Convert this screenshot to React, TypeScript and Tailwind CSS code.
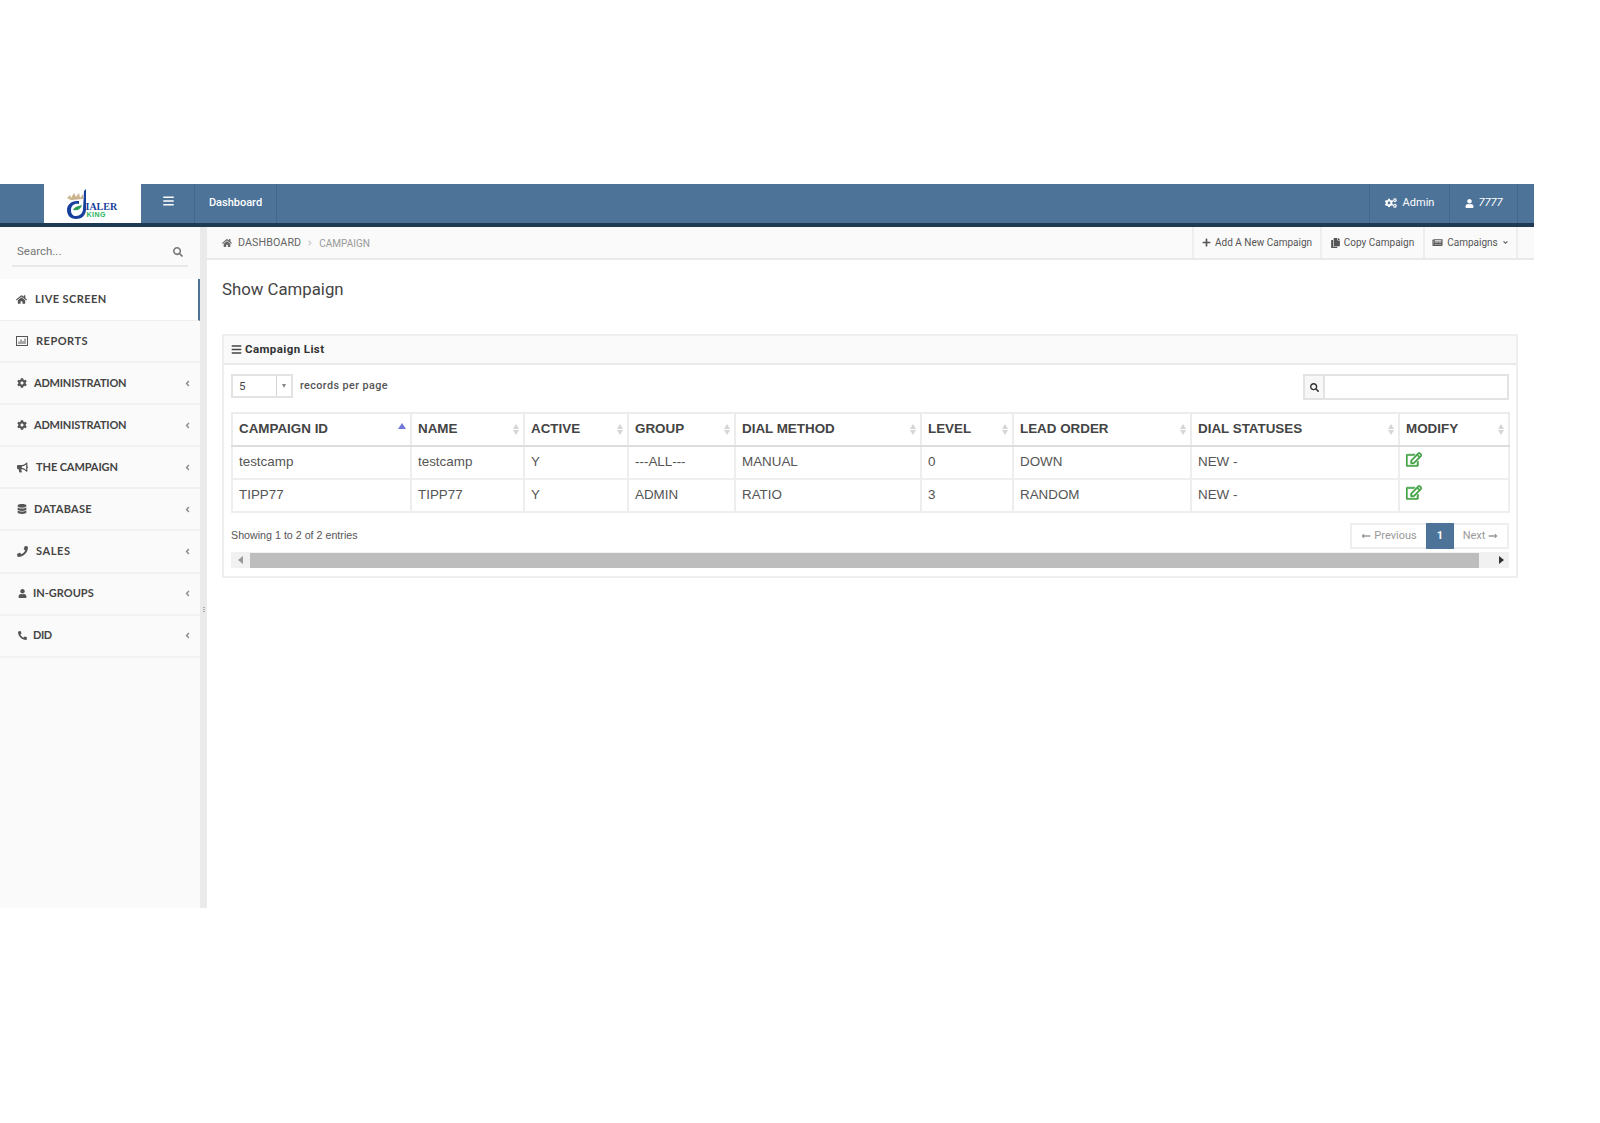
import type { ReactNode } from "react"
import {
  FaAngleDown,
  FaAngleLeft,
  FaAngleRight,
  FaBars,
  FaBullhorn,
  FaCog,
  FaCogs,
  FaCopy,
  FaDatabase,
  FaHome,
  FaLongArrowAltLeft,
  FaLongArrowAltRight,
  FaNewspaper,
  FaPhone,
  FaPlus,
  FaRegEdit,
  FaSearch,
  FaUser,
} from "react-icons/fa"

function ReportIcon() {
  return (
    <svg viewBox="0 0 12 10" className="w-[12px] h-[10px]" fill="none">
      <rect x="0.5" y="0.5" width="11" height="9" stroke="currentColor" />
      <path d="M3 8V5.5M5 8V3.5M7 8V5M9 8V2.5" stroke="currentColor" />
    </svg>
  )
}

const menu: { label: string; icon: ReactNode; text: string; arrow?: boolean }[] = [
  { label: "REPORTS", icon: <ReportIcon />, text: "ml-[8px] tracking-[0.5px]" },
  { label: "ADMINISTRATION", icon: <FaCog className="w-[10px] h-[10px]" />, text: "ml-[6px] tracking-[-0.2px]", arrow: true },
  { label: "ADMINISTRATION", icon: <FaCog className="w-[10px] h-[10px]" />, text: "ml-[6px] tracking-[-0.2px]", arrow: true },
  { label: "THE CAMPAIGN", icon: <FaBullhorn className="w-[11px] h-[11px]" />, text: "ml-[8px] tracking-[-0.1px]", arrow: true },
  { label: "DATABASE", icon: <FaDatabase className="w-[10px] h-[10px]" />, text: "ml-[6px] tracking-[0.3px]", arrow: true },
  { label: "SALES", icon: <FaPhone className="w-[11px] h-[11px]" />, text: "ml-[8px] tracking-[0.6px]", arrow: true },
  { label: "IN-GROUPS", icon: <FaUser className="w-[9px] h-[9px]" />, text: "ml-[5px]", arrow: true },
  { label: "DID", icon: <FaPhone className="w-[9px] h-[9px] rotate-90" />, text: "ml-[5px] tracking-[-0.4px]", arrow: true },
]

const columns = [
  { label: "CAMPAIGN ID", width: "w-[179px]" },
  { label: "NAME", width: "w-[113px]" },
  { label: "ACTIVE", width: "w-[104px]" },
  { label: "GROUP", width: "w-[107px]" },
  { label: "DIAL METHOD", width: "w-[186px]" },
  { label: "LEVEL", width: "w-[92px]" },
  { label: "LEAD ORDER", width: "w-[178px]" },
  { label: "DIAL STATUSES", width: "w-[208px]" },
  { label: "MODIFY", width: "w-[110px]" },
]

const rows = [
  ["testcamp", "testcamp", "Y", "---ALL---", "MANUAL", "0", "DOWN", "NEW -"],
  ["TIPP77", "TIPP77", "Y", "ADMIN", "RATIO", "3", "RANDOM", "NEW -"],
]

function Logo() {
  return (
    <div className="relative w-[56px] h-[32px]">
      <svg viewBox="0 0 60 32" className="w-[60px] h-[32px]">
        <path d="M2 9 L5 6 L6 9 L9 4 L11 8 L14 4 L15 9 L18 5 L18 10 L6 11 Z" fill="#c9b28c" />
        <path d="M19 2 L21 0 L21 20 C21 27 16 30 11 30 C5 30 2 26 2 21 C2 16 6 12 12 12 L14 12 L14 15 C9 14 6 17 6 21 C6 25 8 27 11 27 C15 27 18 24 18 20 Z" fill="#173f9c" />
        <path d="M8 21 C10 17 14 17 17 16 C16 20 13 22 8 21 Z" fill="#2f9e57" />
      </svg>
      <span className="absolute left-[21px] top-[11px] font-['Liberation_Serif',serif] font-bold text-[10px] leading-[13px] text-[#173f9c]">IALER</span>
      <span className="absolute left-[22px] top-[22px] font-['Liberation_Sans',sans-serif] font-bold text-[7px] leading-[8px] tracking-[0.5px] text-[#22b45a]">KING</span>
    </div>
  )
}

function SortArrows({ active }: { active?: boolean }) {
  if (active) {
    return <span className="w-0 h-0 mb-[7px] border-x-[4px] border-x-transparent border-b-[6px] border-b-[#6f78d8]" />
  }
  return (
    <span className="flex flex-col gap-[1px] items-center">
      <span className="w-0 h-0 border-x-[3.5px] border-x-transparent border-b-[5px] border-b-[#d5d5d5]" />
      <span className="w-0 h-0 border-x-[3.5px] border-x-transparent border-t-[5px] border-t-[#d5d5d5]" />
    </span>
  )
}

function Sidebar() {
  return (
    <aside className="w-[200px] shrink-0 bg-[#fafafa] font-['Lato',sans-serif]">
      <div className="h-[52px] px-[12px] pt-[14px]">
        <div className="h-[26px] border-b-2 border-[#e9e9e9] flex items-center justify-between pl-[5px] pr-[5px] pb-[3px] text-[#777]">
          <span className="font-['Roboto',sans-serif] text-[11.5px]">Search...</span>
          <FaSearch className="w-[10px] h-[10px]" />
        </div>
      </div>
      <div className="h-[42px] bg-white border-r-2 border-[#4d7399] border-b border-b-[#efefef] flex items-center pl-[16px] text-[#555]">
        <FaHome className="w-[11px] h-[11px]" />
        <span className="ml-[8px] text-[11px] font-bold tracking-[0.4px] text-[#444]">LIVE SCREEN</span>
      </div>
      {menu.map((item, i) => (
        <div key={i} className="h-[42.1px] border-b-2 border-[#f1f1f1] flex items-center pl-[16px] pr-[8px] text-[#555]">
          <span className="w-[12px] flex justify-center">{item.icon}</span>
          <span className={`${item.text} text-[11px] font-bold text-[#444]`}>{item.label}</span>
          {item.arrow && <FaAngleLeft className="ml-auto w-[9px] h-[9px] text-[#888]" />}
        </div>
      ))}
    </aside>
  )
}

function CampaignCard() {
  return (
    <section className="border-2 border-[#eeeeee] h-[244px]">
      <div className="h-[29px] bg-[#fafafa] border-b-2 border-[#e9e9e9] flex items-center pl-[7px] text-[#333] font-['Roboto',sans-serif]">
        <FaBars className="w-[11px] h-[11px] text-[#444]" />
        <span className="ml-[3px] text-[11.5px] font-bold tracking-[0.4px]">Campaign List</span>
      </div>
      <div className="px-[7px] pt-[9px]">
        <div className="flex items-start justify-between h-[38px]">
          <div className="flex items-center">
            <div className="w-[62px] h-[24px] border-2 border-[#e3e3e3] flex text-[11.5px] text-[#444] font-['Roboto',sans-serif]">
              <span className="flex-1 pl-[6px] leading-[20px]">5</span>
              <span className="w-[15px] border-l border-[#d5d5d5] flex items-center justify-center">
                <span className="w-0 h-0 border-x-[2.5px] border-x-transparent border-t-[4px] border-t-[#888]" />
              </span>
            </div>
            <span className="ml-[7px] font-['Roboto',sans-serif] text-[10.8px] font-medium tracking-[0.4px] text-[#555]">records per page</span>
          </div>
          <div className="w-[206px] h-[26px] border-2 border-[#e3e3e3] flex">
            <span className="w-[20px] bg-[#f7f7f7] border-r-2 border-[#e3e3e3] flex items-center justify-center text-[#333]">
              <FaSearch className="w-[9px] h-[9px]" />
            </span>
          </div>
        </div>
        <table className="w-[1277px] table-fixed border-collapse font-['Liberation_Sans',sans-serif] text-[13.4px]">
          <thead>
            <tr className="h-[33px]">
              {columns.map((col, i) => (
                <th key={col.label} className={`${col.width} border-2 border-[#ececec] border-b-[#dddddd] pl-[6px] pr-[4px] text-left font-bold text-[#444]`}>
                  <div className="flex items-center justify-between">
                    <span>{col.label}</span>
                    <SortArrows active={i === 0} />
                  </div>
                </th>
              ))}
            </tr>
          </thead>
          <tbody>
            {rows.map((row) => (
              <tr key={row[0]} className="h-[33px]">
                {row.map((cell, i) => (
                  <td key={i} className="border-2 border-[#eeeeee] px-[6px] text-[#555]">{cell}</td>
                ))}
                <td className="border-2 border-[#eeeeee] px-[6px] pb-[7px] text-[#3fa142]">
                  <FaRegEdit className="w-[16px] h-[15px] stroke-current stroke-[20]" />
                </td>
              </tr>
            ))}
          </tbody>
        </table>
        <div className="flex items-center justify-between mt-[10px] h-[26px] font-['Liberation_Sans',sans-serif] text-[#999]">
          <span className="pb-[2px] text-[10.7px] text-[#555]">Showing 1 to 2 of 2 entries</span>
          <div className="flex h-[26px] pt-0 text-[11px] font-['Roboto',sans-serif]">
            <span className="w-[76px] border-2 border-r-0 border-[#eeeeee] flex items-center justify-center gap-[3px]">
              <FaLongArrowAltLeft className="w-[10px] h-[10px]" />
              Previous
            </span>
            <span className="w-[28px] bg-[#4d7399] text-white font-bold flex items-center justify-center">1</span>
            <span className="w-[55px] border-2 border-l-0 border-[#eeeeee] flex items-center justify-center gap-[3px]">
              Next
              <FaLongArrowAltRight className="w-[10px] h-[10px]" />
            </span>
          </div>
        </div>
        <div className="mt-[3px] h-[16px] bg-[#f1f1f1] flex items-center">
          <span className="w-[19px] flex justify-center">
            <span className="w-0 h-0 border-y-[4px] border-y-transparent border-r-[5px] border-r-[#999]" />
          </span>
          <span className="flex-1 h-[15px] bg-[#bdbdbd]" />
          <span className="w-[30px] flex justify-end pr-[5px]">
            <span className="w-0 h-0 border-y-[4px] border-y-transparent border-l-[5px] border-l-[#333]" />
          </span>
        </div>
      </div>
    </section>
  )
}

export default function App() {
  return (
    <div className="w-[1600px] h-[1123px] bg-white pt-[184px] overflow-hidden">
      <div className="w-[1534px]">
        <header className="h-[43px] bg-[#4d7399] border-b-[4px] border-[#1f3a52] flex text-white font-['Roboto',sans-serif] text-[11px]">
          <div className="w-[44px]" />
          <div className="w-[97px] bg-white flex items-center justify-center pt-[2px]">
            <Logo />
          </div>
          <div className="w-[54px] border-r border-[#42688d] flex items-center justify-center pl-[2px] pb-[5px]">
            <FaBars className="w-[11px] h-[12px]" />
          </div>
          <div className="w-[82px] border-r border-[#42688d] flex items-center justify-center pb-[1px] font-medium">Dashboard</div>
          <div className="flex-1" />
          <div className="w-[80px] border-l border-[#42688d] flex items-center justify-center gap-[6px] pb-[1px]">
            <FaCogs className="w-[12px] h-[12px]" />
            Admin
          </div>
          <div className="w-[69px] border-x border-[#42688d] flex items-center justify-center gap-[5px] pb-[1px]">
            <FaUser className="w-[9px] h-[9px]" />
            <span className="italic">7777</span>
          </div>
          <div className="w-[16px]" />
        </header>
        <div className="flex h-[681px]">
          <Sidebar />
          <div className="w-[7px] bg-[#eaeaea] flex flex-col items-center justify-center gap-[1px] pt-[84px] shrink-0">
            <span className="w-[2px] h-[1px] bg-[#aaa]" />
            <span className="w-[2px] h-[1px] bg-[#aaa]" />
            <span className="w-[2px] h-[1px] bg-[#aaa]" />
          </div>
          <main className="flex-1 min-w-0">
            <div className="h-[33px] bg-[#fafafa] border-b-2 border-[#e9e9e9] flex items-center pl-[15px] pr-[16px] font-['Roboto',sans-serif] text-[10.7px] text-[#666]">
              <FaHome className="w-[10px] h-[10px]" />
              <span className="ml-[6px] pt-[1px] tracking-[0.1px]">DASHBOARD</span>
              <FaAngleRight className="mx-[5px] w-[8px] h-[8px] text-[#ccc]" />
              <span className="pt-[1px] text-[10px] text-[#999]">CAMPAIGN</span>
              <div className="ml-auto flex h-full border-r-2 border-[#eeeeee] text-[#555] text-[10px]">
                <span className="w-[128px] border-l-2 border-[#eeeeee] flex items-center justify-center gap-[4px]">
                  <FaPlus className="w-[9px] h-[9px]" />
                  Add A New Campaign
                </span>
                <span className="w-[103px] border-l-2 border-[#eeeeee] flex items-center justify-center gap-[4px]">
                  <FaCopy className="w-[9px] h-[10px]" />
                  Copy Campaign
                </span>
                <span className="w-[93px] border-l-2 border-[#eeeeee] flex items-center justify-center gap-[4px]">
                  <FaNewspaper className="w-[11px] h-[9px]" />
                  Campaigns
                  <FaAngleDown className="w-[7px] h-[7px]" />
                </span>
              </div>
            </div>
            <div className="px-[15px] pr-[16px]">
              <h1 className="h-[74px] pt-[17px] font-['Roboto',sans-serif] text-[16.8px] leading-[24px] text-[#444]">Show Campaign</h1>
              <CampaignCard />
            </div>
          </main>
        </div>
      </div>
    </div>
  )
}
